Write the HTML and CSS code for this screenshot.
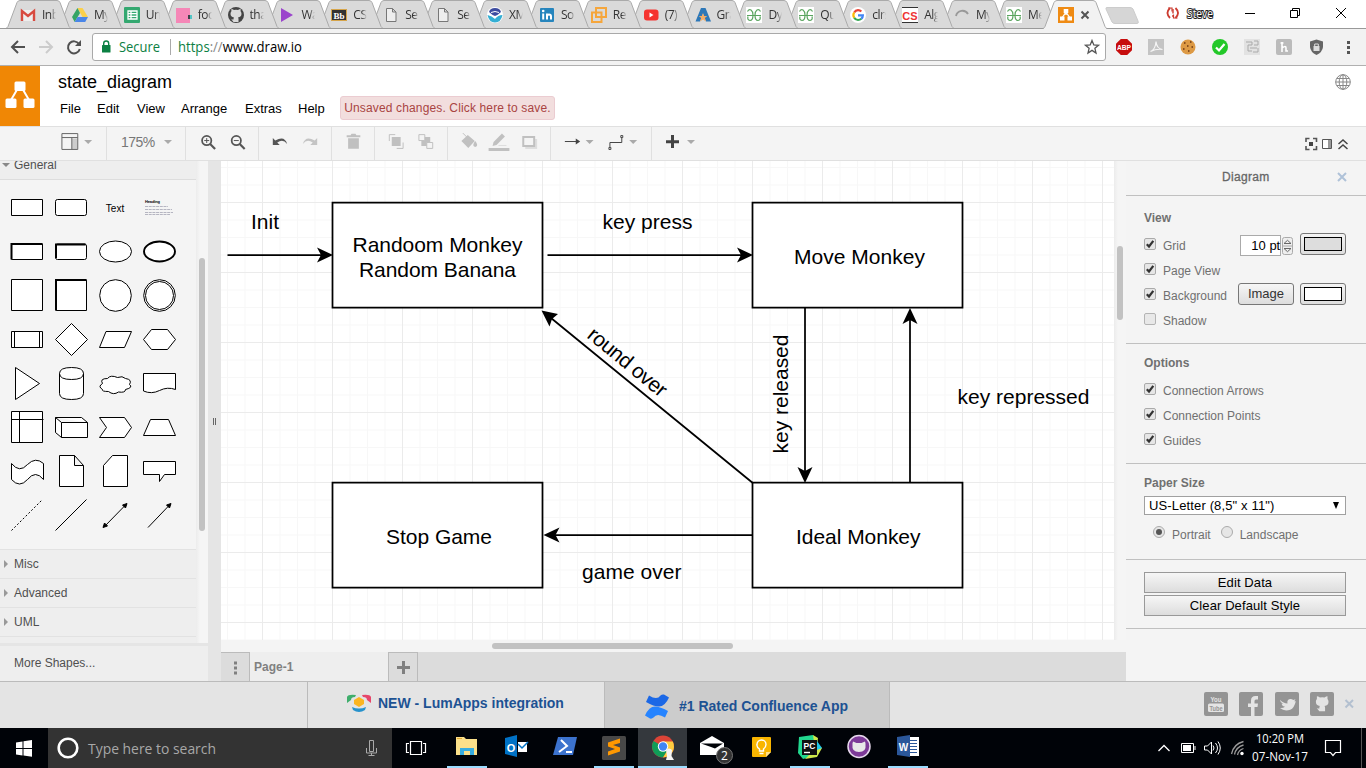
FILE: index.html
```html
<!DOCTYPE html>
<html lang="en">
<head>
<meta charset="utf-8">
<title>state_diagram</title>
<link rel="stylesheet" href="styles.css">
</head>
<body>
<svg class="defs" width="0" height="0">
  <defs>
    <path id="tab" d="M0 28.5L2 26.500L11 2.500Q12 .5 14 .5H51Q53 .5 54 2.500L63 26.500L65 28.500"/>
    <g id="doc"><path d="M3.500 1.500h6l3.500 3.500v9.500h-9.500zM9.500 1.500v3.500h3.500" fill="#eee" stroke="#777"/></g>
    <g id="gfg"><rect width="16" height="16" fill="#fff"/><path d="M1.500 4.500Q3 2 5 3Q7 4.500 7 8Q7 13.500 4 13.500Q1 13 2 9.500M1 8.500h14M14.500 4.500Q13 2 11 3Q9 4.500 9 8Q9 13.500 12 13.500Q15 13 14 9.500" fill="none" stroke="#5aa55f" stroke-width="1.200"/></g>
    <g id="octo"><path d="M5.500 15v-2.500Q3.500 13 2.500 11.300M10.500 15v-3Q10.500 11 10 10.500Q13.500 10 13.500 6.800Q13.500 5.300 12.600 4.300V2Q11.500 2 10 3Q8 2.600 6 3Q4.500 2 3.400 2V4.300Q2.500 5.300 2.500 6.800Q2.500 10 6 10.500Q5.500 11 5.500 12.500V15z"/></g>
    <g id="check"><rect x=".5" y=".5" width="11" height="11" rx="1.500" fill="#e6e6e6" stroke="#aaa"/><path d="M2.800 6.200L5 8.500L9.300 2.800" fill="none" stroke="#333" stroke-width="2.200"/></g>
  </defs>
</svg>

<div class="tabstrip">
  <svg class="tabshapes" width="1366" height="29" viewBox="0 0 1366 29">
    <g fill="#dadada" stroke="#aaa">
      <use href="#tab" x="993"/><use href="#tab" x="941"/><use href="#tab" x="889"/><use href="#tab" x="837"/><use href="#tab" x="785"/><use href="#tab" x="733"/><use href="#tab" x="681"/><use href="#tab" x="629"/><use href="#tab" x="577"/><use href="#tab" x="525"/><use href="#tab" x="473"/><use href="#tab" x="421"/><use href="#tab" x="370"/><use href="#tab" x="318"/><use href="#tab" x="266"/><use href="#tab" x="214"/><use href="#tab" x="162"/><use href="#tab" x="110"/><use href="#tab" x="58"/><use href="#tab" x="6"/>
    </g>
    <path d="M0 28.500H1366" stroke="#999"/>
    <path d="M1043 29L1045 26.500L1054 2.500Q1055 .5 1057 .5H1093Q1095 .5 1096 2.500L1105 26.500L1107 29" fill="#f2f2f2" stroke="#aaa"/>
    <path d="M1107 7.500H1130Q1132 7.500 1133 9L1138 21Q1139 23.500 1137 23.500H1115Q1113 23.500 1112 22L1106 9Q1105.500 7.500 1107 7.500Z" fill="#d6d6d6" stroke="#ccc"/>
  </svg>
  <div class="tabs">
    <div class="tab"><svg viewBox="0 0 16 16"><path d="M1 3h14v11H1z" fill="#eee"/><path d="M2 14V4l6 5l6-5v10" fill="none" stroke="#d84b40" stroke-width="2.400"/></svg><span>Inb</span></div>
    <div class="tab"><svg viewBox="0 0 16 16"><path d="M5.500 1h5L16 10h-5.500z" fill="#fbd04b"/><path d="M5.500 1L0 10l2.700 5L8 6z" fill="#35a565"/><path d="M2.700 15h10.500L16 10H5.500z" fill="#4a86e8"/></svg><span>My</span></div>
    <div class="tab"><svg viewBox="0 0 16 16"><rect width="16" height="16" rx="1" fill="#34a870"/><path d="M4 4h9v8H4zM4 6.700h9M4 9.300h9M7 4v8" fill="none" stroke="#fff" stroke-width="1.300"/></svg><span>Un</span></div>
    <div class="tab"><svg viewBox="0 0 16 16"><path d="M0 1h14v15H0z" fill="#f587b7"/><path d="M12 8h4v4h-4z" fill="#3e444b"/><path d="M14 8h2v4h-2z" fill="#53c6c6"/></svg><span>foo</span></div>
    <div class="tab"><svg viewBox="0 0 16 16"><circle cx="8" cy="8" r="8" fill="#444"/><use href="#octo" fill="#dadada"/></svg><span>tha</span></div>
    <div class="tab"><svg viewBox="0 0 16 16"><path d="M2 1l12 7l-12 7z" fill="#9b45cc"/></svg><span>Wa</span></div>
    <div class="tab"><svg viewBox="0 0 16 16"><rect x=".5" y="2.500" width="15" height="11" fill="#333" stroke="#d6a54b"/><text x="8" y="11.500" text-anchor="middle" class="bb">Bb</text></svg><span>CS</span></div>
    <div class="tab"><svg viewBox="0 0 16 16"><use href="#doc"/></svg><span>Se</span></div>
    <div class="tab"><svg viewBox="0 0 16 16"><use href="#doc"/></svg><span>Se</span></div>
    <div class="tab"><svg viewBox="0 0 16 16"><circle cx="8" cy="8" r="8" fill="#fff"/><path d="M2 5Q3 1 8 1T14 5Q11 8 8 9Q5 8 2 5" fill="#3d4ca0"/><path d="M4 5.500Q8 3.500 12 5.500" fill="none" stroke="#fff"/><path d="M.5 8Q5 9 8 12Q11 8 15.500 8Q14 15.500 8 15.500T.5 8" fill="#35afd4"/></svg><span>XM</span></div>
    <div class="tab"><svg viewBox="0 0 16 16"><rect x="1" y="1" width="14" height="14" rx="1" fill="#2685bd"/><path d="M4.200 6.500v6M8 6.500v6M8 9.500q0-2 2-2t2 2v3" fill="none" stroke="#fff" stroke-width="2"/><circle cx="4.200" cy="4" r="1.300" fill="#fff"/></svg><span>So</span></div>
    <div class="tab"><svg viewBox="0 0 16 16"><path d="M5 1h10v9H5zM1 5.500h9.500V15H1z" fill="none" stroke="#f5a63c" stroke-width="2"/></svg><span>Re</span></div>
    <div class="tab"><svg viewBox="0 0 16 16"><rect x="1" y="2.500" width="14.500" height="11" rx="3" fill="#f5332f"/><path d="M6.500 5.500v5l4-2.500z" fill="#fff"/></svg><span>(7)</span></div>
    <div class="tab"><svg viewBox="0 0 16 16"><path d="M6 1h4.500L16 14.500h-5L8 7l-3 7.500H.5z" fill="#2e78b8"/><path d="M8 6l1.200 3h3l-2.300 2l1 3.500L8 12.500l-2.900 2l1-3.500l-2.300-2h3z" fill="#f3ad68"/></svg><span>Gra</span></div>
    <div class="tab"><svg viewBox="0 0 16 16"><use href="#gfg"/></svg><span>Dy</span></div>
    <div class="tab"><svg viewBox="0 0 16 16"><use href="#gfg"/></svg><span>Qui</span></div>
    <div class="tab"><svg viewBox="0 0 16 16"><circle cx="8" cy="8" r="8" fill="#fff"/><g fill="none" stroke-width="2.200"><path d="M4.200 5.500Q5.500 3.200 8 3.200Q10 3.200 11.300 4.600" stroke="#e94335"/><path d="M4.200 5.500Q2.500 8 4.200 10.800" stroke="#fbbc05"/><path d="M4.200 10.800Q5.500 13 8 13Q10 13 11.300 11.800" stroke="#34a853"/><path d="M8 8.300h4.900Q12.900 10.500 11.300 11.800" stroke="#4285f4"/></g></svg><span>clrs</span></div>
    <div class="tab"><svg viewBox="0 0 16 16"><path d="M0 0h16v16H0z" fill="#fff"/><path d="M0 .5h16M0 15.500h16" stroke="#333"/><text x="8" y="12.500" text-anchor="middle" class="cs">CS</text></svg><span>Alg</span></div>
    <div class="tab"><svg viewBox="0 0 16 16"><path d="M2 9a6.500 6.500 0 0 1 12-2" fill="none" stroke="#999" stroke-width="1.800"/></svg><span>My</span></div>
    <div class="tab"><svg viewBox="0 0 16 16"><use href="#gfg"/></svg><span>Me</span></div>
    <div class="tab tab-active"><svg viewBox="0 0 16 16"><path d="M0 0h16v16H0z" fill="#ef8b14"/><path d="M8 4v4M8 5l-4 6M8 5l4 6" stroke="#fff" stroke-width="1.300"/><path d="M5.700 2h4.600v4H5.700zM2 9.500h4.500v4H2zM9.500 9.500H14v4H9.500z" fill="#fff"/></svg><svg class="tabclose" viewBox="0 0 10 10"><path d="M1.500 1.500l7 7M8.500 1.500l-7 7" stroke="#555" stroke-width="2"/></svg></div>
  </div>
  <svg class="winctl" width="226" height="28" viewBox="1140 0 226 28">
    <path d="M1170 8q-5 5 0 10M1175.500 8q5 5 0 10" fill="none" stroke="#cc3b30" stroke-width="1.800"/><path d="M1168 8h4v3.500M1177.500 18h-4v-3.500" fill="none" stroke="#cc3b30" stroke-width="1.200"/><path d="M1173 9v4.500M1173 15v2" stroke="#cc3b30" stroke-width="1.400"/>
    <text x="1187" y="18" textLength="26" lengthAdjust="spacingAndGlyphs" class="steve">Steve</text>
    <path d="M1245 13.500h10M1290.500 10.500h7v7h-7zM1292.500 10.500v-2h7v7h-2M1336 8l10 10M1346 8l-10 10" fill="none" stroke="#000"/>
  </svg>
</div>

<div class="navbar">
  <svg width="92" height="36" viewBox="0 29 92 36"><path d="M25 47H12M18 41l-6 6l6 6" fill="none" stroke="#505050" stroke-width="2"/><path d="M39 47h13M46 41l6 6l-6 6" fill="none" stroke="#ccc" stroke-width="2"/><path d="M79 44a6 6 0 1 0 .8 5" fill="none" stroke="#505050" stroke-width="2"/><path d="M81 40v6h-6z" fill="#505050"/></svg>
  <div class="omnibox">
    <svg width="230" height="26" viewBox="93 34 230 26"><rect x="102" y="45" width="8.500" height="7.500" rx=".5" fill="#0b8043"/><path d="M103.700 45.500v-2a2.500 2.500 0 0 1 5 0v2" fill="none" stroke="#0b8043" stroke-width="1.400"/>
      <text x="119" y="52" textLength="41" lengthAdjust="spacingAndGlyphs" class="url green">Secure</text><path d="M170.500 39v16" stroke="#aaa"/>
      <text x="178" y="52" textLength="124" lengthAdjust="spacingAndGlyphs" class="url"><tspan class="green">https</tspan><tspan class="gray">://</tspan>www.draw.io</text></svg>
    <svg width="26" height="26" viewBox="1079 34 26 26"><path d="M1092 40.500l1.800 4.500l4.700.3l-3.600 3l1.100 4.700l-4-2.600l-4 2.600l1.100-4.700l-3.600-3l4.700-.3z" fill="none" stroke="#555" stroke-width="1.300"/></svg>
  </div>
  <svg width="260" height="36" viewBox="1106 29 260 36">
    <path d="M1120.800 39h6.400l4.800 4.800v6.400l-4.800 4.800h-6.400l-4.800-4.800v-6.400z" fill="#c70d0d"/><text x="1124" y="50" text-anchor="middle" textLength="14" lengthAdjust="spacingAndGlyphs" class="abp">ABP</text>
    <path d="M1148 39h16v16h-16z" fill="#c4c4c4"/><path d="M1150.500 51.500q5-2 5.500-10q.5 7 6.500 8q-6-1-12 2" fill="none" stroke="#f5f5f5" stroke-width="1.200"/>
    <circle cx="1188" cy="47" r="7.500" fill="#dd9a45"/><path d="M1184 43h1.500M1190 42h1.500M1187 46h1.500M1191.500 47h1.500M1183 49h1.500M1188 51h1.500" stroke="#6b3510" stroke-width="1.600"/>
    <circle cx="1220" cy="47" r="8" fill="#23c829"/><path d="M1216 47.500l3 3l5.500-6.500" fill="none" stroke="#fff" stroke-width="2.200"/>
    <path d="M1244 39h16v16h-16z" fill="#e2e2e2"/><path d="M1246 42h6v3h-4v6h4M1250 48h7M1254 41h4v4h-4M1253 52h5v-4" fill="none" stroke="#aaa"/>
    <rect x="1276" y="39" width="16" height="16" rx="2" fill="#bbb"/><path d="M1282 42v10M1280.500 43h3M1282 48q4-3 4 0v3h2" fill="none" stroke="#fff" stroke-width="1.600"/>
    <path d="M1316.500 39.500l6.500 2v5.500q-.5 5-6.500 8q-6-3-6.500-8v-5.500z" fill="#666"/><path d="M1313.500 46h6v5h-6z" fill="#ddd"/><path d="M1314.700 46v-2h3.600v2" fill="none" stroke="#ddd"/>
    <path d="M1347 41h3v3h-3zM1347 46h3v3h-3zM1347 51h3v3h-3z" fill="#555"/>
  </svg>
</div>

<div class="header">
  <div class="logo"><svg width="40" height="60" viewBox="0 66 40 60"><path d="M18 88l-7 12M22 88l7 12" stroke="#fff" stroke-width="2"/><rect x="14.500" y="81.500" width="11" height="9.500" rx="1.500" fill="#fff"/><rect x="5.500" y="98.500" width="11" height="9.500" rx="1.500" fill="#fff"/><rect x="23.500" y="98.500" width="11" height="9.500" rx="1.500" fill="#fff"/></svg></div>
  <div class="titles">
    <div class="filename">state_diagram</div>
    <div class="menu"><span>File</span><span>Edit</span><span>View</span><span>Arrange</span><span>Extras</span><span>Help</span><div class="unsaved">Unsaved changes. Click here to save.</div></div>
  </div>
  <svg class="globe" width="16" height="16" viewBox="0 0 16 16" fill="none" stroke="#888"><circle cx="8" cy="8" r="7.300"/><ellipse cx="8" cy="8" rx="3.800" ry="7.300"/><path d="M8 .7v14.600M.7 8h14.600M2 4.500h12M2 11.500h12"/></svg>
</div>

<div class="toolbar">
  <svg class="seg" width="107" height="33" viewBox="0 127 107 33"><path d="M72.500 138.500h6v11h-6z" fill="#ccc"/><path d="M62.500 133.500h16v16h-16zM62.500 137.500h16M72.500 137.500v12" fill="none" stroke="#666"/><path d="M85 140h8l-4 4z" fill="#aaa"/></svg>
  <div class="seg zoomlevel"><span>175%</span><svg width="8" height="4"><path d="M0 0h8L4 4z" fill="#aaa"/></svg></div>
  <svg class="seg" width="73" height="33" viewBox="186 127 73 33"><g fill="none" stroke="#555" stroke-width="1.800"><circle cx="207" cy="140.500" r="4.700"/><path d="M210.500 144l5 5" stroke-width="2.200"/><path d="M204.500 140.500h5M207 138v5" stroke-width="1"/><circle cx="237" cy="140.500" r="4.700"/><path d="M240.500 144l5 5" stroke-width="2.200"/><path d="M234.500 140.500h5" stroke-width="1"/></g></svg>
  <svg class="seg" width="73" height="33" viewBox="259 127 73 33"><path d="M273 138v7h7l-2.500-2.500q6-4 10 1.500q-2.500-9-12-3.500z" fill="#555"/><path d="M318 138v7h-7l2.500-2.500q-6-4-10 1.500q2.500-9 12-3.500z" fill="#c4c4c4"/></svg>
  <svg class="seg" width="43" height="33" viewBox="332 127 43 33"><path d="M347 135h4l1-1.500h4l1 1.500h4v2h-14zM348.500 138h11v11h-11z" fill="#c0c0c0"/></svg>
  <svg class="seg" width="73" height="33" viewBox="375 127 73 33"><path d="M392 137h9v9h-9zM422 137h9v9h-9z" fill="#c0c0c0"/><path d="M389.500 141v-6.500h6M397 148.500h6.500v-6" fill="none" stroke="#c0c0c0"/><path d="M419.500 134.500h6v6h-6zM427.500 142.500h6v6h-6z" fill="#f4f4f4" stroke="#c0c0c0"/></svg>
  <svg class="seg" width="103" height="33" viewBox="448 127 103 33"><path d="M461.500 141l6.500-6l7 6l-6.500 7zM475.500 141q4 5 0 6q-4-1 0-6" fill="#c0c0c0"/><path d="M463 133l5 5M463.500 140.500h10" fill="none" stroke="#c0c0c0"/><path d="M493 146l1-4l8.500-8.500l3 3l-8.500 8.500zM489 148h21v3h-21z" fill="#c0c0c0"/><path d="M499 145.500h8" stroke="#ddd"/><path d="M526 139h12v10h-12z" fill="#ddd"/><path d="M524 137h11v9h-11z" fill="#f4f4f4" stroke="#c0c0c0" stroke-width="2"/></svg>
  <svg class="seg" width="101" height="33" viewBox="551 127 101 33"><path d="M565 141.500h12M610.500 147v-4.500h12v-5" fill="none" stroke="#444"/><path d="M576 138.500l4.500 3l-4.500 3z" fill="#444"/><path d="M621.500 135.500h2v2h-2zM609.500 147.500h2v2h-2z" fill="#fff" stroke="#444"/><path d="M586 140h8l-4 4zM630 140h8l-4 4z" fill="#aaa"/></svg>
  <svg class="seg last" width="60" height="33" viewBox="652 127 60 33"><path d="M666 141.700h13M672.500 135v13" stroke="#444" stroke-width="3"/><path d="M687 140h8l-4 4z" fill="#aaa"/></svg>
  <svg class="viewctl" width="70" height="33" viewBox="1296 127 70 33"><path d="M1306 142v-3.500h3.500M1313 138.500h3.500v3.500M1316.500 146v3.500h-3.500M1309.500 149.500h-3.500v-3.500" fill="none" stroke="#555" stroke-width="1.600"/><path d="M1309 142h4v4h-4z" fill="#444"/><path d="M1322.500 139.500h9v9h-9z" fill="#fff" stroke="#555"/><path d="M1328 140h3v8h-3z" fill="#999"/><path d="M1338.500 144l4.500-4l4.500 4M1338.500 149l4.500-4l4.500 4" fill="none" stroke="#444" stroke-width="1.500"/></svg>
</div>

<div class="workspace">
  <div class="sidebar">
    <div class="palettes">
      <div class="palettelist">
        <div class="ptitle general"><svg width="8" height="4"><path d="M0 0h8L4 4z" fill="#888"/></svg>General</div>
        <div class="shapes">
          <svg viewBox="0 0 44 44"><path d="M6.500 13.500h31v16h-31z"/></svg>
          <svg viewBox="0 0 44 44"><rect x="6.500" y="13.500" width="31" height="16" rx="2"/></svg>
          <svg viewBox="0 0 44 44"><text x="22" y="25.500" text-anchor="middle" class="ptext">Text</text></svg>
          <svg viewBox="0 0 44 44"><text x="8" y="17" class="phead" textLength="15">Heading</text><path d="M8 20.500h23M8 23.500h27M8 26.500h28M8 28.500h25" stroke="#99a" stroke-width=".7" stroke-dasharray="3 .7"/></svg>
          <svg viewBox="0 0 44 44"><path d="M6.500 14v15.500h31V14z"/><path d="M6.500 29.500V14h31" stroke-width="2"/></svg>
          <svg viewBox="0 0 44 44"><rect x="6.500" y="14" width="31" height="15.500" rx="2"/><path d="M7 28V14.500h29.500" stroke-width="2"/></svg>
          <svg viewBox="0 0 44 44"><ellipse cx="22.500" cy="21.500" rx="16" ry="10.500"/></svg>
          <svg viewBox="0 0 44 44"><ellipse cx="22.500" cy="21.500" rx="15.500" ry="10" stroke-width="1.900"/></svg>
          <svg viewBox="0 0 44 44"><path d="M6.500 5.500h31v31h-31z"/></svg>
          <svg viewBox="0 0 44 44"><path d="M7 6h30.500v30.500H7z"/><path d="M7 36.500V6h30.500" stroke-width="2"/></svg>
          <svg viewBox="0 0 44 44"><circle cx="22.500" cy="21.500" r="15.800"/></svg>
          <svg viewBox="0 0 44 44"><circle cx="22.500" cy="21.500" r="15.800"/><circle cx="22.500" cy="21.500" r="14"/></svg>
          <svg viewBox="0 0 44 44"><path d="M6.500 13.500h31v16h-31zM9.500 13.500v16M34.500 13.500v16"/></svg>
          <svg viewBox="0 0 44 44"><path d="M22.500 5.500L38.500 21.500L22.500 37.500L6.500 21.500z"/></svg>
          <svg viewBox="0 0 44 44"><path d="M13 13.500H38.500L31.500 29.500H6.500z"/></svg>
          <svg viewBox="0 0 44 44"><path d="M14.500 11.500h16l8 10l-8 10h-16l-8-10z"/></svg>
          <svg viewBox="0 0 44 44"><path d="M10.500 5.500l24 16l-24 16z"/></svg>
          <svg viewBox="0 0 44 44"><path d="M10.500 11.500v20q0 6 12 6t12-6v-20q0-6-12-6t-12 6q0 6 12 6t12-6"/></svg>
          <svg viewBox="0 0 44 44"><path d="M14.500 16.500q-8 0-5 5q-5 3 0 6q-1 2 6 2q5 4 10 .5q7 1 7-2.500q8-2 4-5q3-5-4-6q-3-3-8-1q-7-3-10 1z"/></svg>
          <svg viewBox="0 0 44 44"><path d="M6.500 11.500h32v16q-8-3-16 1t-16 .5z"/></svg>
          <svg viewBox="0 0 44 44"><path d="M6.500 5.500h31v31h-31zM6.500 13.500h32M14.500 5.500v31"/></svg>
          <svg viewBox="0 0 44 44"><path d="M6.500 11.500h26l6 5v15h-26l-6-5zM6.500 11.500l6 5h26M12.500 16.500v15"/></svg>
          <svg viewBox="0 0 44 44"><path d="M6.500 11.500h25l7 10l-7 10h-25l7-10z"/></svg>
          <svg viewBox="0 0 44 44"><path d="M13.500 13.500h18l7 16h-32z"/></svg>
          <svg viewBox="0 0 44 44"><path d="M6.500 13.500q8 10 16 1q8-8 16-1v16q-8-10-16 0q-8 9-16 0z"/></svg>
          <svg viewBox="0 0 44 44"><path d="M10.500 5.500h15l9 10v21h-24zM25.500 5.500v10h9"/></svg>
          <svg viewBox="0 0 44 44"><path d="M19.500 5.500h15v31h-24v-21z"/></svg>
          <svg viewBox="0 0 44 44"><path d="M6.500 11.500h32v13H27.500l-5 7v-7h-16z"/></svg>
          <svg viewBox="0 0 44 44"><path d="M6.500 36.500l31-31" stroke-dasharray="2 2"/></svg>
          <svg viewBox="0 0 44 44"><path d="M6.500 36.500l31-31"/></svg>
          <svg viewBox="0 0 44 44"><path d="M11 33L33 10.500"/><path d="M10 33.500l1.500-4.500l3 3zM34 9.500l-4.500 1.500l3 3z" fill="#000"/></svg>
          <svg viewBox="0 0 44 44"><path d="M11 33.500L33 10.500"/><path d="M34 9.500l-4.500 1.500l3 3z" fill="#000"/></svg>
        </div>
        <div class="ptitle"><svg width="4" height="8"><path d="M0 0v8l4-4z" fill="#999"/></svg>Misc</div>
        <div class="ptitle"><svg width="4" height="8"><path d="M0 0v8l4-4z" fill="#999"/></svg>Advanced</div>
        <div class="ptitle"><svg width="4" height="8"><path d="M0 0v8l4-4z" fill="#999"/></svg>UML</div>
        <div class="ptitle"></div>
      </div>
      <div class="vscroll side"><div class="thumb"></div></div>
    </div>
    <div class="more">More Shapes...</div>
  </div>
  <div class="splitter"><i></i><i></i></div>
  <div class="center">
    <div class="canvasrow">
      <svg class="canvas" width="893" height="479" viewBox="221 161 893 479">
        <defs><pattern id="grid" width="70" height="70" patternUnits="userSpaceOnUse" x="262" y="202"><path d="M18 0v70M35.500 0v70M53 0v70M0 18h70M0 35.500h70M0 53h70" stroke="#f7f7f7"/><path d="M.5 0v70M0 .5h70" stroke="#ebebeb"/></pattern></defs>
        <rect x="221" y="161" width="893" height="479" fill="#fff"/>
        <rect x="221" y="161" width="893" height="479" fill="url(#grid)"/>
        <g fill="#fff" stroke="#000" stroke-width="1.750"><path d="M332.500 202.700h210v105h-210zM752.500 202.700h210v105h-210zM332.500 482.700h210v105h-210zM752.500 482.700h210v105h-210z"/></g>
        <path d="M227.500 255H322M547.500 255H742M805 307.700V472M910 482.700V318M752.500 535H553M752.500 482.700L551 318" stroke="#000" stroke-width="1.750" fill="none"/>
        <g><path id="head" d="M333 255l-16-7.500l4 7.500l-4 7.500z"/><use href="#head" x="420"/><path d="M805 483l-7.500-16l7.500 4l7.500-4zM910 308l-7.500 16l7.500-4l7.500 4zM543.500 535l16-7.500l-4 7.500l4 7.500zM541.500 310.500l16.500 3.500l-6 5l-2.500 7.500z"/></g>
        <g class="dtext">
          <text x="251" y="229" textLength="28">Init</text>
          <text x="352.500" y="252" textLength="170">Randoom Monkey</text>
          <text x="359" y="277" textLength="157">Random Banana</text>
          <text x="602.500" y="229" textLength="90">key press</text>
          <text x="794" y="264" textLength="131">Move Monkey</text>
          <text x="957.500" y="404" textLength="132">key repressed</text>
          <text x="386" y="544" textLength="106">Stop Game</text>
          <text x="796" y="544" textLength="124.500">Ideal Monkey</text>
          <text x="582" y="579" textLength="99.500">game over</text>
          <text transform="translate(787.500 453.500) rotate(-90)" textLength="119">key released</text>
          <text transform="translate(586 337) rotate(39.500)" textLength="96">round over</text>
        </g>
      </svg>
      <div class="vscroll"><div class="thumb"></div></div>
    </div>
    <div class="hscroll"><div class="thumb"></div></div>
    <div class="pagetabs">
      <div class="pbtn"><svg width="29" height="28" viewBox="0 0 29 28"><path d="M13 8.500h3v3h-3zM13 13.500h3v3h-3zM13 18.500h3v3h-3z" fill="#808080"/></svg></div>
      <div class="page">Page-1</div>
      <div class="pbtn plus"><svg width="28" height="28" viewBox="0 0 28 28"><path d="M8 14.500h13M14.500 8v13" stroke="#808080" stroke-width="3"/></svg></div>
    </div>
  </div>
  <div class="format">
    <div class="ftitle"><span>Diagram</span><svg width="10" height="10"><path d="M1 1l8 8M9 1l-8 8" stroke="#afc2d8" stroke-width="2"/></svg></div>
    <div class="fsec view">
      <h3>View</h3>
      <div class="opt"><svg class="cb"><use href="#check"/></svg><span>Grid</span><div class="num">10 pt</div><svg class="spin" width="11" height="18" viewBox="0 0 11 18"><rect x=".5" y=".5" width="10" height="17" rx="2" fill="#eee" stroke="#aaa"/><path d="M.5 9h10" stroke="#aaa"/><path d="M2 6.500h7L5.500 3.300zM2 11.500h7L5.500 14.700z" fill="#eee" stroke="#666"/></svg><div class="swatch gray-sw"><i></i></div></div>
      <div class="opt"><svg class="cb"><use href="#check"/></svg><span>Page View</span></div>
      <div class="opt"><svg class="cb"><use href="#check"/></svg><span>Background</span><div class="imgbtn">Image</div><div class="swatch"><i></i></div></div>
      <div class="opt"><svg class="cb"><rect x=".5" y=".5" width="11" height="11" rx="1.500" fill="#e8e8e8" stroke="#b4b4b4"/></svg><span>Shadow</span></div>
    </div>
    <div class="fsec options">
      <h3>Options</h3>
      <div class="opt"><svg class="cb"><use href="#check"/></svg><span>Connection Arrows</span></div>
      <div class="opt"><svg class="cb"><use href="#check"/></svg><span>Connection Points</span></div>
      <div class="opt"><svg class="cb"><use href="#check"/></svg><span>Guides</span></div>
    </div>
    <div class="fsec paper">
      <h3>Paper Size</h3>
      <div class="select"><span>US-Letter (8,5" x 11")</span><svg width="6" height="7"><path d="M0 0h6L3 7z"/></svg></div>
      <div class="radios"><svg class="cb"><circle cx="6" cy="6" r="5.500" fill="#e6e6e6" stroke="#aaa"/><circle cx="6" cy="6" r="3" fill="#555"/></svg><span>Portrait</span><svg class="cb"><circle cx="6" cy="6" r="5.500" fill="#e6e6e6" stroke="#aaa"/></svg><span>Landscape</span></div>
    </div>
    <div class="fsec actions"><div class="btn">Edit Data</div><div class="btn">Clear Default Style</div></div>
  </div>
</div>

<div class="footer">
  <div class="ad lum"><svg width="24" height="18" viewBox="0 0 24 18"><path d="M0 9V3q1-3 9-2l-1 2q-4 0-4 3z" fill="#3fae6c"/><path d="M24 9V3q-1-3-9-2l1 2q4 0 4 3z" fill="#e6466a"/><path d="M5 13q7 3 14 0l-1 3q-6 4-12 0z" fill="#2792cc"/><path d="M7 6l5-3l5 3v4l-5 3l-5-3z" fill="#fbb521"/></svg><span>NEW - LumApps integration</span></div>
  <div class="ad conf"><svg width="24" height="25" viewBox="0 0 24 25"><path id="wave" d="M1 8L4 1.500Q12 6.500 15.500 1.500Q17 0 19 .5L24 3.500Q20 12.500 14 12.500Q9 12.500 1 8z" fill="#1b68e6"/><path d="M23 17L20 23.500Q12 18.500 8.500 23.500Q7 25 5 24.500L0 21.500Q4 12.500 10 12.500Q15 12.500 23 17z" fill="#2684ff"/></svg><span>#1 Rated Confluence App</span></div>
  <svg class="social" width="166" height="46" viewBox="1200 682 166 46">
    <g fill="#949494"><rect x="1204" y="692" width="24" height="24" rx="2"/><rect x="1239" y="692" width="24" height="24" rx="2"/><rect x="1275" y="692" width="24" height="24" rx="2"/><rect x="1310" y="692" width="24" height="24" rx="2"/></g>
    <rect x="1208" y="703.500" width="16" height="8.500" rx="1.500" fill="#e4e4e4"/><text x="1216" y="702" text-anchor="middle" textLength="11" lengthAdjust="spacingAndGlyphs" class="yt">You</text><text x="1216" y="710.800" text-anchor="middle" textLength="13" lengthAdjust="spacingAndGlyphs" class="yt dark">Tube</text>
    <path d="M1251 716v-9h-3v-3.500h3v-3q0-4.500 4.500-4.500h2.500v3.500h-2q-1.500 0-1.500 1.500v2.500h3.500l-.5 3.500h-3v9z" fill="#e4e4e4"/>
    <path d="M1280 708q3 .3 5-1.300q-3-.5-3.500-3l1.500 0q-3-1.500-3-4q3.500 3.800 7.500 3.800q-.8-4 2.500-4.500q2-.2 3.200 1l2.300-.7l-1.200 2l1.500 0q-1.600 7-5.600 8.500q-6 2-10.200-1.800" fill="#e4e4e4"/>
    <g transform="translate(1313 694) scale(1.150)" fill="#e4e4e4"><use href="#octo"/></g>
    <path d="M1345.500 700l7.500 7.500M1353 700l-7.500 7.500" stroke="#b3c0d0" stroke-width="2"/>
  </svg>
</div>

<div class="taskbar">
  <svg width="48" height="40" viewBox="0 728 48 40"><path d="M16 742.500l6.500-1v6.500H16zM23.500 741.300l8.500-1.300v8h-8.500zM16 749h6.500v6.500l-6.500-1zM23.500 749H32v7.800l-8.500-1.200z" fill="#fff"/></svg>
  <svg class="search" width="344" height="40" viewBox="48 728 344 40"><circle cx="68" cy="748" r="9.300" fill="none" stroke="#fff" stroke-width="2.600"/><text x="88" y="754" textLength="128" lengthAdjust="spacingAndGlyphs" class="searchtext">Type here to search</text><path d="M369.500 740.500h4v11h-4zM366.500 748v5h10v-5M371.500 753v3M368.500 755.500h6" fill="none" stroke="#aaa"/></svg>
  <svg width="50" height="40" viewBox="392 728 50 40"><path d="M410.500 741.500h11v13h-11zM409 743.500h-2.500v9h2.500M423 743.500h2.500v9h-2.500" fill="none" stroke="#fff" stroke-width="1.200"/></svg>
  <div class="app open"><svg viewBox="442 728 49 40"><path d="M456 737h8l2 2h11v16h-21z" fill="#fbe08a"/><path d="M457 738.500h5" stroke="#e0a530"/><path d="M460 755v-7h14v7h-4v-4h-6v4z" fill="#37ade0"/></svg></div>
  <div class="app"><svg viewBox="491 728 49 40"><path d="M505 738l12-3v22l-12-3z" fill="#0072c6"/><text x="511" y="751.500" text-anchor="middle" class="ol">O</text><path d="M518 742h9v10h-9z" fill="#fff"/><path d="M518 744l4 4l6-6" fill="none" stroke="#0072c6" stroke-width="1.500"/></svg></div>
  <div class="app"><svg viewBox="540 728 49 40"><path d="M558 737h19l-4 18h-20z" fill="#3c73ce"/><path d="M561 740l6 6l-8 6M566 752h6" fill="none" stroke="#fff" stroke-width="2"/></svg></div>
  <div class="app open"><svg viewBox="589 728 49 40"><rect x="602" y="736" width="24" height="24" rx="1.500" fill="#484848"/><path d="M608 742.500l12-4v4.500l-7 2l7 2.500v4l-12 4v-4l7-2.500l-7-2.500z" fill="#ff9800"/></svg></div>
  <div class="app open active"><svg viewBox="638 728 49 40"><circle cx="663" cy="746.500" r="11" fill="#db4437"/><path d="M663 746.500L653.500 741A11 11 0 0 0 663 757.500l5-8z" fill="#0f9d58"/><path d="M663 757.500A11 11 0 0 0 672.800 741.500H663l5 8z" fill="#ffcd40"/><circle cx="663" cy="746.500" r="5.200" fill="#fff"/><circle cx="663" cy="746.500" r="4.200" fill="#4285f4"/><path d="M666 750q3-3 6 0l-.5 6l2.500 4h-8l1-4z" fill="#f5f5f5"/></svg></div>
  <div class="app"><svg viewBox="687 728 49 40"><path d="M700 743l12-7l12 7v12h-24z" fill="#fff"/><path d="M701 743.500h22l-8 5l-4-1.500z" fill="#000308"/><circle cx="724.500" cy="755.500" r="8" fill="#333" stroke="#777"/><text x="724.500" y="760" text-anchor="middle" class="badge">2</text></svg></div>
  <div class="app"><svg viewBox="736 728 49 40"><path d="M753 737h17q1 0 1 1v14l-5 5h-13q-1 0-1-1v-18q0-1 1-1" fill="#f9b500"/><path d="M766 757v-5h5z" fill="#ffe08a"/><path d="M759.500 749q-3-2-2.500-4.500a4.500 4.500 0 0 1 9 0q0 2.500-2.500 4.500v2h-4zM759.500 753.500h4" fill="none" stroke="#fff" stroke-width="1.400"/></svg></div>
  <div class="app open"><svg viewBox="785 728 49 40"><path d="M799 737l14-2l4 6v14l-14 4l-5-6z" fill="#22d88f"/><path d="M813 735l5 3l-1 7l5 3l-5 9l-12 2l10-10z" fill="#cfe94b"/><path d="M817 741l5 7l-5 2z" fill="#1fc8e8"/><path d="M802 740h15v15h-15z" fill="#111"/><text x="809.500" y="748.500" text-anchor="middle" class="pc">PC</text><path d="M804 752.500h6" stroke="#fff" stroke-width="1.400"/></svg></div>
  <div class="app"><svg viewBox="834 728 49 40"><circle cx="859" cy="746.500" r="11" fill="#7d3a98" stroke="#e6d8ec" stroke-width="1.500"/><path d="M853 741.500l3.500 1.500h5L865 741.500q.8 2 .5 3.500q1 7-6.500 7t-6.500-7q-.3-1.500.5-3.500" fill="#e8e8e8"/></svg></div>
  <div class="app open"><svg viewBox="883 728 49 40"><path d="M907 737h12v19h-12z" fill="#fff"/><path d="M910 740.500h7M910 743.500h7M910 746.500h7M910 749.500h7M910 752.500h7" stroke="#2b579a"/><path d="M897 737l13-2v22l-13-2z" fill="#2b579a"/><text x="903.500" y="750.500" text-anchor="middle" class="wd">W</text></svg></div>
  <svg class="tray" width="226" height="40" viewBox="1140 728 226 40"><path d="M1158.500 751l5.500-5.500l5.500 5.500" fill="none" stroke="#fff" stroke-width="1.300"/><path d="M1181.500 743.500h12v9h-12zM1195 746v4" fill="none" stroke="#fff"/><path d="M1183 745h8v6h-8z" fill="#fff"/><path d="M1204.500 746h3l4-4v12l-4-4h-3zM1213 745.500q2 2.500 0 5M1215.500 743q4 5 0 10M1218 741.500q4.500 6.500 0 13" fill="none" stroke="#fff"/><path d="M1231.500 754q2-10 12-12.500M1234.500 754.500q1.500-7.500 9-9.500M1237.500 755q1-5 6-6.500" fill="none" stroke="#999" stroke-width="1.300"/><circle cx="1242" cy="753.500" r="1.700" fill="#fff"/>
    <text x="1256" y="743" textLength="48" lengthAdjust="spacingAndGlyphs" class="clock">10:20 PM</text><text x="1252" y="761" textLength="56" lengthAdjust="spacingAndGlyphs" class="clock">07-Nov-17</text>
    <path d="M1325.500 740.500h15v12h-5l-2.500 3l-2.500-3h-5z" fill="none" stroke="#fff" stroke-width="1.200"/><path d="M1361.500 728v40" stroke="#555"/></svg>
</div>
</body>
</html>
```
FILE: styles.css
```css
* { box-sizing: border-box; }
body { margin: 0; width: 1366px; height: 768px; overflow: hidden; display: flex; flex-direction: column; background: #fff; font-family: "Liberation Sans", Arial, sans-serif; font-size: 12px; color: #000; }
svg { display: block; flex: none; }
i { display: block; }
.defs { position: absolute; }
.green { fill: #0b8043; }
.gray { fill: #888; }

/* browser tab strip */
.tabstrip { position: relative; height: 29px; flex: none; display: flex; justify-content: space-between; background: #fff; }
.tabshapes { position: absolute; left: 0; top: 0; }
.tabs { position: relative; display: flex; padding: 7px 0 0 20px; }
.tab { width: 51.9px; display: flex; gap: 6px; height: 16px; align-items: center; }
.tab svg { width: 16px; height: 16px; }
.tab span { width: 14px; overflow: hidden; white-space: nowrap; font: 12px/16px "Open Sans", "Noto Sans", sans-serif; letter-spacing: -.5px; color: #333; -webkit-mask-image: linear-gradient(90deg, #000 60%, transparent); mask-image: linear-gradient(90deg, #000 60%, transparent); }
.tab .tabclose { width: 10px; height: 10px; }
.winctl { position: relative; }
.bb { font: bold 9px "Liberation Serif", serif; fill: #fff; }
.cs { font: bold 11px "Liberation Sans", sans-serif; fill: #e33; }
.steve { font: 12px "Open Sans", sans-serif; fill: #fff; stroke: #222; stroke-width: 2px; paint-order: stroke; }

/* address bar */
.navbar { height: 37px; flex: none; display: flex; background: #f2f2f2; border-bottom: 1px solid #b0b0b0; }
.omnibox { width: 1014px; height: 28px; margin-top: 4px; border: 1px solid #a9a9a9; border-radius: 3px; background: #fff; display: flex; justify-content: space-between; }
.url { font: 14px "Open Sans", "Noto Sans", sans-serif; }
.abp { font: bold 7px "Liberation Sans", sans-serif; fill: #fff; }

/* document header */
.header { height: 60px; flex: none; display: flex; }
.logo { width: 40px; background: #f08705; }
.titles { flex: 1; padding: 5px 0 0 18px; }
.filename { font-size: 18px; line-height: 22px; }
.menu { display: flex; align-items: center; gap: 16px; height: 24px; margin-top: 3px; padding-left: 2px; font-size: 13px; }
.menu span:nth-child(1) { width: 21px; }
.menu span:nth-child(2) { width: 24px; }
.menu span:nth-child(3) { width: 28px; }
.menu span:nth-child(4) { width: 48px; }
.menu span:nth-child(5) { width: 37px; }
.menu span:nth-child(6) { width: 26px; }
.unsaved { width: 215px; height: 24px; border: 1px solid #ebccd1; border-radius: 3px; background: #f2dede; color: #a94442; font-size: 12px; line-height: 22px; text-align: center; white-space: nowrap; letter-spacing: .14px; }
.globe { margin: 8px 15px 0 0; }

/* editor toolbar */
.toolbar { height: 35px; flex: none; display: flex; background: #f4f4f4; border-top: 1px solid #e0e0e0; border-bottom: 1px solid #e0e0e0; }
.seg { border-right: 1px solid #e0e0e0; height: 33px; }
.seg.last { border: 0; }
.zoomlevel { width: 79px; display: flex; align-items: center; justify-content: space-between; padding: 0 13px 4px 14px; font-size: 14px; letter-spacing: -.5px; color: #777; }
.viewctl { margin-left: auto; }

/* workspace */
.workspace { height: 520px; flex: none; display: flex; }
.sidebar { width: 208px; display: flex; flex-direction: column; background: #e5e5e5; }
.palettes { height: 482px; display: flex; overflow: hidden; }
.palettelist { width: 196px; height: 500px; margin-top: -11px; background: #f4f4f4; }
.ptitle { height: 29px; display: flex; align-items: center; gap: 6px; padding-left: 4px; background: #eee; border-bottom: 1px solid #e2e2e2; color: #505050; line-height: 28px; }
.ptitle.general { height: 30px; gap: 4px; padding-left: 2px; border-color: #ddd; }
.shapes { display: grid; grid-template-columns: repeat(4, 44px); padding: 6px 0 11px 5px; height: 370px; border-bottom: 1px solid #e2e2e2; }
.shapes svg { width: 44px; height: 44px; fill: #fff; stroke: #000; stroke-width: 1; }
.shapes text { stroke: none; fill: #000; }
.ptext { font-size: 10px; }
.phead { font-size: 4px; font-weight: bold; }
.vscroll { width: 12px; background: linear-gradient(90deg, #ececec, #f5f5f5 4px); padding-left: 3px; }
.vscroll .thumb { width: 6px; height: 74px; margin-top: 85px; border-radius: 3px; background: #c2c2c2; }
.side .thumb { height: 273px; margin-top: 97px; }
.more { height: 35px; margin-top: 3px; padding-left: 14px; line-height: 34px; background: #eee; color: #505050; }
.splitter { width: 13px; background: #e5e5e5; display: flex; gap: 1px; align-items: center; padding-left: 5px; }
.splitter i { width: 1px; height: 7px; background: #666; }
.center { width: 905px; background: #dcdcdc; }
.canvasrow { display: flex; height: 479px; }
.hscroll { height: 12px; padding: 3px 0 0 271px; background: #f4f4f4; }
.hscroll .thumb { width: 241px; height: 6px; border-radius: 3px; background: #c2c2c2; }
.dtext { font-size: 21px; }
.pagetabs { height: 29px; display: flex; }
.pbtn { width: 29px; background: #dcdcdc; border: 1px solid #bbb; border-width: 1px 1px 0 0; }
.pbtn.plus { width: 30px; border-width: 1px 1px 0 1px; }
.page { width: 138px; padding-left: 4px; background: #eee; color: #808080; font-weight: bold; line-height: 30px; }

/* format panel */
.format { width: 240px; background: #f4f4f4; color: #707070; }
.ftitle { height: 35px; display: flex; align-items: center; padding: 0 19px 2px 96px; justify-content: space-between; border-bottom: 1px solid #c0c0c0; color: #666; letter-spacing: .3px; -webkit-text-stroke: .3px #666; }
.fsec { border-bottom: 1px solid #c0c0c0; padding: 0 20px 0 18px; }
.fsec h3 { margin: 0; font-size: 12px; line-height: 15px; }
.view { height: 148px; padding-top: 15px; }
.opt { height: 25px; display: flex; align-items: center; }
.view h3 { margin-bottom: 7px; }
.cb { width: 12px; height: 12px; margin-right: 7px; position: relative; top: -2px; }
.opt span { width: 77px; white-space: nowrap; line-height: 23px; padding-top: 2px; }
.num { width: 42px; height: 21px; border: 1px solid #aaa; background: #fff; color: #000; font-size: 13px; line-height: 19px; text-align: right; }
.spin { margin: 0 7px 0 1px; }
.swatch { width: 46px; height: 22px; margin-top: -3px; border: 1px solid #777; border-radius: 3px; background: linear-gradient(#f4f4f4, #ddd); padding: 3px; }
.swatch i { height: 14px; border: 1px solid #000; background: #fff; }
.swatch.gray-sw i { background: #ddd; }
.imgbtn { width: 56px; height: 22px; margin: -3px 6px 0 -2px; border: 1px solid #777; border-radius: 3px; background: linear-gradient(#f6f6f6, #ddd); color: #333; font-size: 13px; line-height: 20px; text-align: center; }
.options { height: 120px; padding-top: 12px; }
.options h3 { margin-bottom: 7px; }
.paper { height: 96px; padding-top: 12px; }
.paper h3 { margin-bottom: 5px; }
.select { height: 19px; display: flex; align-items: center; justify-content: space-between; padding: 0 6px 0 4px; border: 1px solid #a0a0a0; background: #fff; color: #000; font-size: 13px; letter-spacing: .14px; }
.radios { display: flex; align-items: center; height: 20px; margin-top: 9px; padding-left: 9px; }
.radios span { margin-right: 10px; padding-top: 1px; }
.actions { height: 69px; padding-top: 12px; }
.btn { height: 21px; margin-bottom: 2px; border: 1px solid #999; background: linear-gradient(#f6f6f6, #ddd); color: #000; font-size: 13px; line-height: 19px; text-align: center; letter-spacing: .1px; }

/* promotion footer */
.footer { height: 47px; flex: none; display: flex; background: #e4e4e4; border-top: 1px solid #bbb; padding-left: 307px; color: #1d5293; font-weight: bold; font-size: 14px; }
.ad { display: flex; align-items: center; gap: 8px; border-left: 1px solid #bbb; white-space: nowrap; }
.lum { width: 297px; padding: 0 0 4px 39px; gap: 7px; }
.conf { width: 286px; padding: 2px 0 0 40px; gap: 10px; background: #ccc; border-right: 1px solid #bbb; }
.social { margin-left: auto; }
.yt { font: bold 8px "Liberation Sans", sans-serif; fill: #e4e4e4; }
.yt.dark { fill: #949494; }

/* desktop taskbar */
.taskbar { height: 40px; flex: none; display: flex; background: #000308; }
.search { background: #333; }
.searchtext { font: 14px "Open Sans", "Noto Sans", sans-serif; fill: #a8a8a8; }
.app { width: 49px; height: 40px; position: relative; }
.app svg { width: 49px; height: 40px; }
.app.open::after { content: ""; position: absolute; left: 5px; bottom: 0; width: 40px; height: 2px; background: #9bdcff; }
.app.active { background: #34383d; }
.app.open.active::after { left: 0; width: 49px; }
.tray { margin-left: auto; }
.ol { font: bold 11px "Liberation Sans", sans-serif; fill: #fff; }
.badge { font: 12px "Open Sans", sans-serif; fill: #fff; }
.pc { font: bold 8.500px "Liberation Sans", sans-serif; fill: #fff; }
.wd { font: bold 10px "Liberation Sans", sans-serif; fill: #fff; }
.clock { font: 12px "Open Sans", "Noto Sans", sans-serif; fill: #fff; }
```
